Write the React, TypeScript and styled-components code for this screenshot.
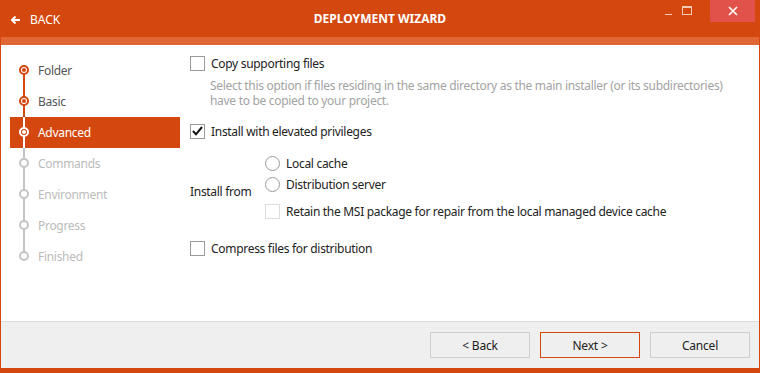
import React from "react";
import styled, { createGlobalStyle } from "styled-components";

const ORANGE = "#d4470f";

const Global = createGlobalStyle`
  html, body { margin: 0; padding: 0; background: #fff; }
  body { font-family: "Segoe UI", "Noto Sans", "Open Sans", sans-serif; font-size: 12px; letter-spacing: -0.3px; }
  * { box-sizing: border-box; }
`;

const Window = styled.div`
  width: 760px;
  height: 373px;
  display: flex;
  flex-direction: column;
  background: ${ORANGE};
  padding: 0 1px 5px 1px;
`;

const TitleBar = styled.div`
  height: 37px;
  display: flex;
  align-items: flex-start;
  position: relative;
  color: #fff;
`;

const BackLink = styled.div`
  display: flex;
  align-items: center;
  gap: 9px;
  padding: 11px 0 0 9px;
  font-size: 12px;
  letter-spacing: 0;
`;

const Title = styled.div`
  position: absolute;
  left: 0;
  right: 0;
  top: 10px;
  text-align: center;
  font-weight: bold;
  font-size: 12px;
  letter-spacing: 0;
  pointer-events: none;
`;

const Controls = styled.div`
  margin-left: auto;
  display: flex;
  align-items: flex-start;
  margin-right: 4px;
`;

const CtlButton = styled.div<{ $close?: boolean }>`
  width: ${(p) => (p.$close ? 45 : 18)}px;
  height: 22px;
  display: flex;
  align-items: center;
  justify-content: center;
  background: ${(p) => (p.$close ? "#e0524a" : "transparent")};
  margin-left: ${(p) => (p.$close ? 14 : 0)}px;
`;

const Strip = styled.div`
  height: 8px;
  background: #e06636;
`;

const Body = styled.div`
  flex: 1;
  background: #fff;
  display: flex;
`;

const Sidebar = styled.div`
  width: 179px;
  padding: 10px 0 0 9px;
  display: flex;
  flex-direction: column;
`;

const Step = styled.div<{ $state: "done" | "current" | "todo" }>`
  height: 31px;
  display: flex;
  align-items: center;
  position: relative;
  padding-left: 28px;
  background: ${(p) => (p.$state === "current" ? ORANGE : "transparent")};
  color: ${(p) =>
    p.$state === "current" ? "#fff" : p.$state === "done" ? "#555" : "#bbb"};
`;

const Line = styled.span<{ $color: string; $top: boolean }>`
  position: absolute;
  left: 13px;
  width: 2px;
  background: ${(p) => p.$color};
  ${(p) => (p.$top ? "top: 0; height: 15px;" : "top: 16px; height: 15px;")}
`;

const Dot = styled.span<{ $state: "done" | "current" | "todo" }>`
  position: absolute;
  left: 9px;
  top: 10px;
  width: 10px;
  height: 10px;
  border-radius: 50%;
  border: 2px solid
    ${(p) =>
      p.$state === "current" ? "#fff" : p.$state === "done" ? ORANGE : "#c4c4c4"};
  background: ${(p) => (p.$state === "current" ? ORANGE : "#fff")};
  z-index: 1;
  &::after {
    content: "";
    display: ${(p) => (p.$state === "todo" ? "none" : "block")};
    position: absolute;
    left: 1px;
    top: 1px;
    width: 4px;
    height: 4px;
    border-radius: 50%;
    background: ${(p) => (p.$state === "current" ? "#fff" : ORANGE)};
  }
`;

const Content = styled.div`
  flex: 1;
  padding: 10px 0 0 10px;
  display: flex;
  flex-direction: column;
  color: #222;
`;

const Row = styled.label<{ $mt?: number }>`
  display: flex;
  align-items: center;
  gap: 6px;
  height: 16px;
  margin-top: ${(p) => p.$mt ?? 0}px;
`;

const Box = styled.span<{ $disabled?: boolean }>`
  width: 15px;
  height: 15px;
  border: 1px solid ${(p) => (p.$disabled ? "#dcdcdc" : "#9a9a9a")};
  background: #fff;
  display: flex;
  align-items: center;
  justify-content: center;
  flex: none;
`;

const Radio = styled.span`
  width: 15px;
  height: 15px;
  border-radius: 50%;
  border: 1px solid #9a9a9a;
  background: #fff;
  flex: none;
`;

const Desc = styled.div`
  margin: 7px 0 0 20px;
  color: #a3a3a3;
  display: flex;
  flex-direction: column;
`;

const DescLine = styled.div`
  height: 15px;
  line-height: 15px;
`;

const InstallFrom = styled.div`
  display: flex;
  margin-top: 16px;
`;

const FromLabel = styled.div`
  width: 75px;
  padding-top: 28px;
`;

const Options = styled.div`
  display: flex;
  flex-direction: column;
`;

const Footer = styled.div`
  height: 47px;
  background: #efefef;
  border-top: 1px solid #dadada;
  display: flex;
  justify-content: flex-end;
  align-items: flex-start;
  padding: 10px 9px 0 0;
  gap: 10px;
`;

const Button = styled.button<{ $primary?: boolean }>`
  width: 100px;
  height: 26px;
  border: 1px solid ${(p) => (p.$primary ? ORANGE : "#cfcfcf")};
  background: #efefef;
  font-family: inherit;
  font-size: 12px;
  letter-spacing: -0.2px;
  color: #222;
  padding: 0;
`;

type S = "done" | "current" | "todo";
const steps: [string, S][] = [
  ["Folder", "done"],
  ["Basic", "done"],
  ["Advanced", "current"],
  ["Commands", "todo"],
  ["Environment", "todo"],
  ["Progress", "todo"],
  ["Finished", "todo"],
];

const lineColor = (i: number, top: boolean) => {
  if (top) return i <= 2 ? (i === 2 ? "#fff" : ORANGE) : "#c4c4c4";
  return i < 2 ? ORANGE : i === 2 ? "#fff" : "#c4c4c4";
};

export default function App() {
  return (
    <>
      <Global />
      <Window>
        <TitleBar>
          <BackLink>
            <svg width="11" height="10" viewBox="0 0 11 10">
              <path d="M10 5H2M5.5 1.5L2 5l3.5 3.5" stroke="#fff" strokeWidth="2" fill="none" />
            </svg>
            BACK
          </BackLink>
          <Title>DEPLOYMENT WIZARD</Title>
          <Controls>
            <CtlButton>
              <svg width="8" height="10" viewBox="0 0 8 10">
                <rect x="0" y="8" width="7" height="1" fill="#f6c9b4" />
              </svg>
            </CtlButton>
            <CtlButton>
              <svg width="11" height="10" viewBox="0 0 11 10">
                <rect x="0.5" y="0.5" width="9" height="8" stroke="#f6c9b4" strokeWidth="1" fill="none" />
                <rect x="0.5" y="0.5" width="9" height="1.5" fill="#f6c9b4" />
              </svg>
            </CtlButton>
            <CtlButton $close>
              <svg width="10" height="10" viewBox="0 0 10 10">
                <path d="M1 1l8 8M9 1l-8 8" stroke="#fff" strokeWidth="1.6" />
              </svg>
            </CtlButton>
          </Controls>
        </TitleBar>
        <Strip />
        <Body>
          <Sidebar>
            {steps.map(([name, st], i) => (
              <Step key={name} $state={st}>
                {i > 0 && <Line $top $color={lineColor(i, true)} />}
                {i < steps.length - 1 && <Line $top={false} $color={lineColor(i, false)} />}
                <Dot $state={st} />
                {name}
              </Step>
            ))}
          </Sidebar>
          <Content>
            <Row>
              <Box />
              Copy supporting files
            </Row>
            <Desc>
              <DescLine>
                Select this option if files residing in the same directory as the main installer (or its subdirectories)
              </DescLine>
              <DescLine>have to be copied to your project.</DescLine>
            </Desc>
            <Row $mt={15}>
              <Box>
                <svg width="11" height="10" viewBox="0 0 11 10">
                  <path d="M1 5l3 3.3L10 1" stroke="#111" strokeWidth="2" fill="none" />
                </svg>
              </Box>
              Install with elevated privileges
            </Row>
            <InstallFrom>
              <FromLabel>Install from</FromLabel>
              <Options>
                <Row>
                  <Radio />
                  Local cache
                </Row>
                <Row $mt={5}>
                  <Radio />
                  Distribution server
                </Row>
                <Row $mt={11}>
                  <Box $disabled />
                  Retain the MSI package for repair from the local managed device cache
                </Row>
              </Options>
            </InstallFrom>
            <Row $mt={21}>
              <Box />
              Compress files for distribution
            </Row>
          </Content>
        </Body>
        <Footer>
          <Button>&lt; Back</Button>
          <Button $primary>Next &gt;</Button>
          <Button>Cancel</Button>
        </Footer>
      </Window>
    </>
  );
}
